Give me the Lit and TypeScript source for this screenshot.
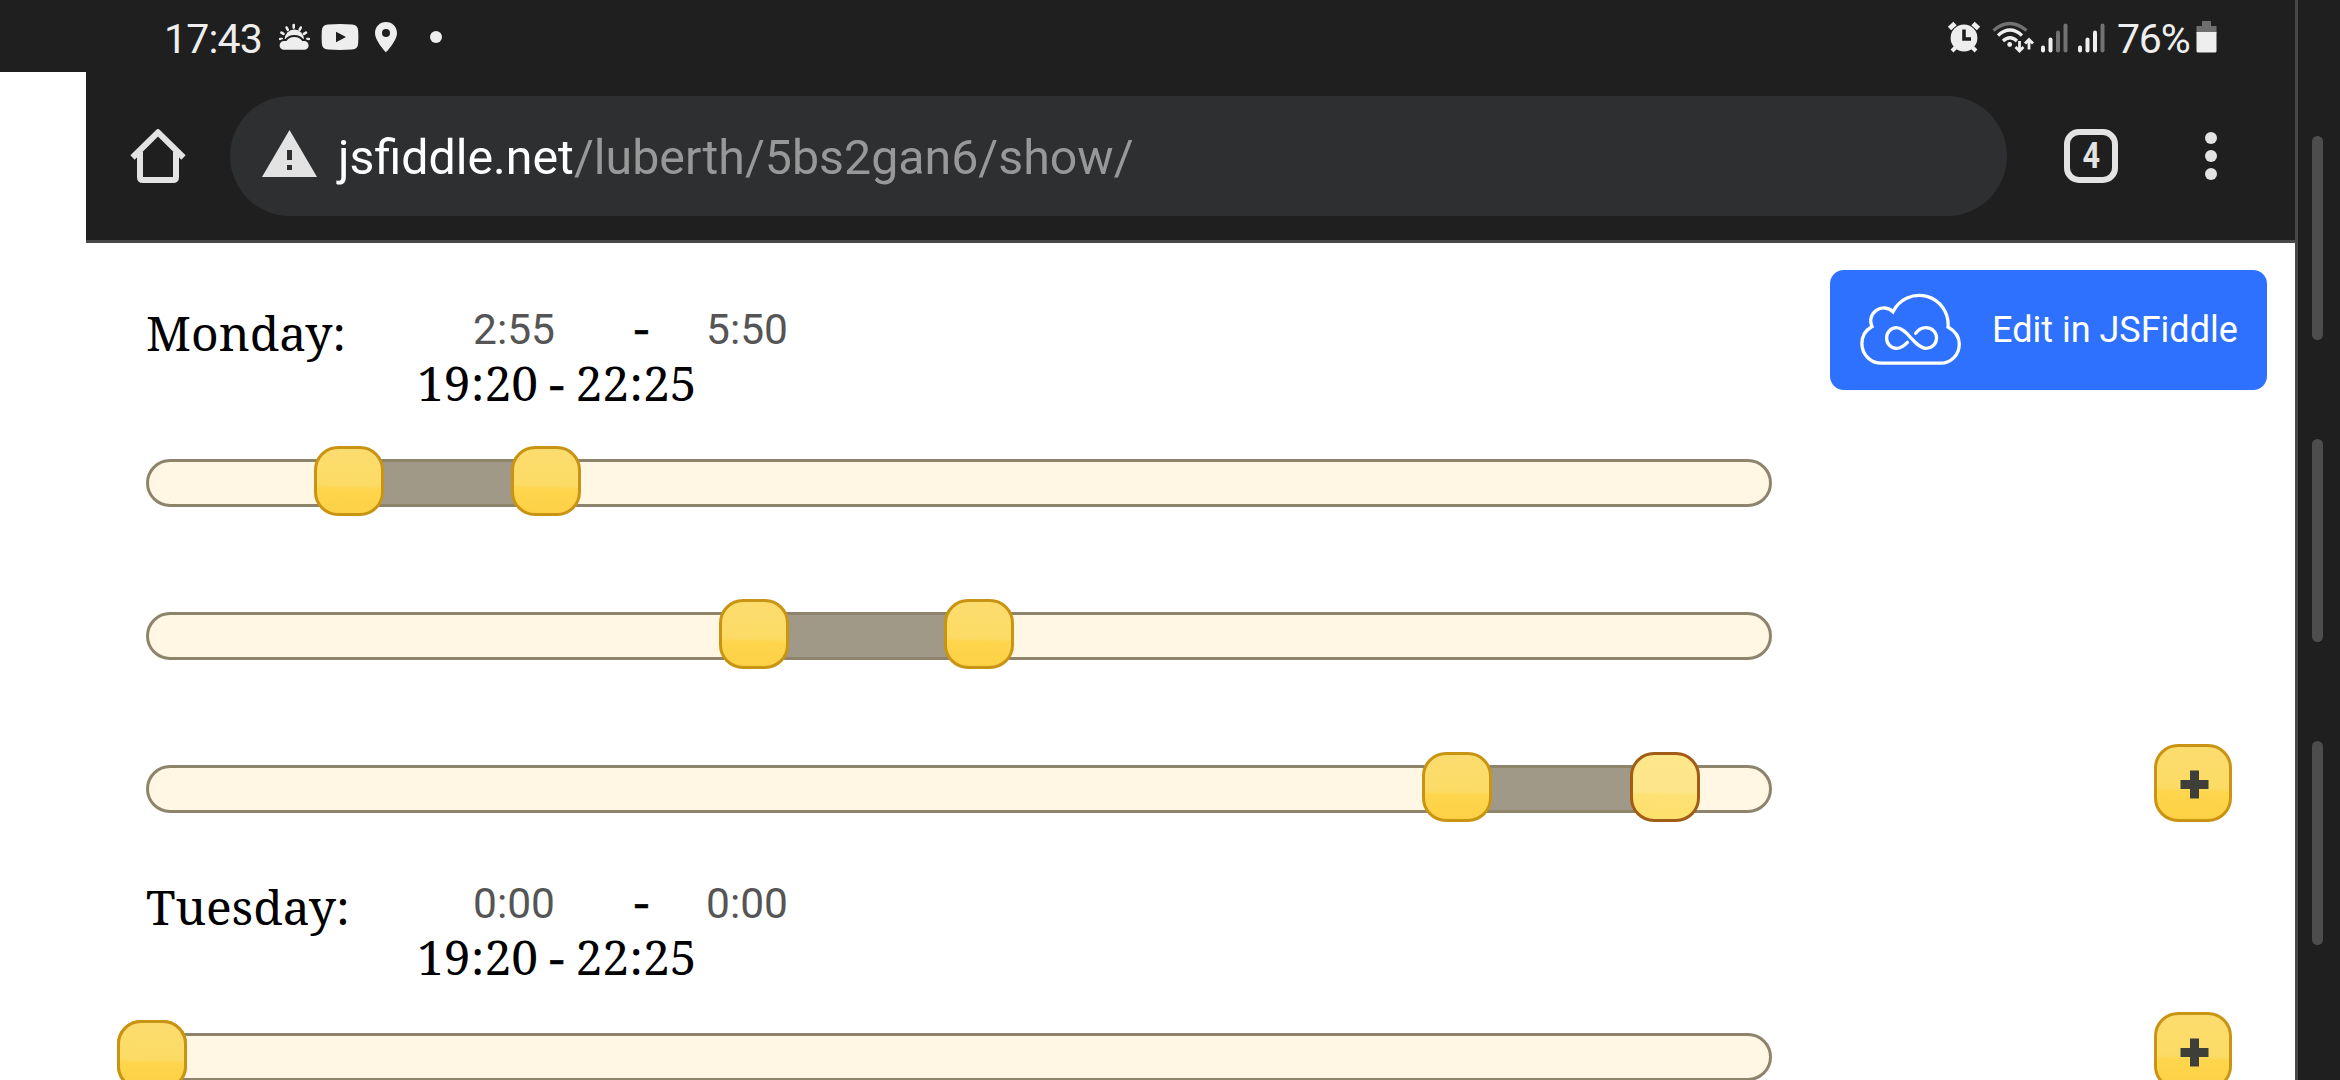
import { LitElement, html, css, svg } from "lit";
import { customElement, property } from "lit/decorators.js";
import { classMap } from "lit/directives/class-map.js";
import { styleMap } from "lit/directives/style-map.js";

@customElement("status-bar")
class StatusBar extends LitElement {
  static styles = css`
    :host {
      display: flex;
      justify-content: space-between;
      box-sizing: border-box;
      height: 72px;
      padding: 0 78px 0 164px;
      background: #1f1f1f;
      color: #eee;
      font: 41px/78px Roboto, sans-serif;
    }
    .group { display: flex; }
    .clock { width: 113px; letter-spacing: -0.8px; }
    .percent { width: 79px; letter-spacing: -1.2px; }
    svg { display: block; height: 72px; }
  `;
  bar(x: number, h: number, on: boolean) {
    return svg`<rect x=${x} y=${52.5 - h} width="4" height=${h} rx="2" fill=${on ? "#eee" : "#727272"}/>`;
  }
  render() {
    return html`
      <div class="group">
        <span class="clock">17:43</span>
        <svg width="175" height="72" viewBox="277 0 175 72" fill="#eee">
          <g stroke="#eee" stroke-width="2.6" stroke-linecap="round">
            <path d="M293.700 25v2.600M286.600 27.500l1.200 2.300M300.800 27.500l-1.200 2.300M281.400 32.600l2.100 1.300M306 32.600l-2.100 1.300M280.200 39h1.600M307.200 39h1.600" />
          </g>
          <path d="M284.500 40a9.800 10.500 0 0 1 19.600 0z" />
          <path d="M284 49.800a4.400 4.400 0 0 1 0-8.800h2.400a9 7.600 0 0 1 15.800 0h2a4.400 4.400 0 0 1 0 8.800z" stroke="#1f1f1f" stroke-width="4" paint-order="stroke" />
          <path fill-rule="evenodd" d="M328 24.400q12-.8 24 0 6 .3 6.200 6.500 .4 6 0 12 -.2 6.200-6.200 6.600 -12 .8-24 0 -6-.4-6.200-6.600 -.4-6 0-12 .2-6.200 6.200-6.500zM336 31.800v10.400l10-5.200z" />
          <path fill-rule="evenodd" d="M386 22c-6.200 0-11 4.800-11 11 0 8 11 19.300 11 19.300s11-11.300 11-19.300c0-6.200-4.800-11-11-11zm0 7a4 4 0 1 1 0 8 4 4 0 0 1 0-8z" />
          <circle cx="436" cy="37" r="6" />
        </svg>
      </div>
      <div class="group">
        <svg width="173" height="72" viewBox="1944 0 173 72" fill="#eee">
          <circle cx="1964" cy="38" r="13.400" />
          <path d="M1949.500 28.500l5.500-5M1978.500 28.500l-5.500-5" stroke="#eee" stroke-width="5" />
          <path d="M1956 47l-4 4M1972 47l4 4" stroke="#eee" stroke-width="4" />
          <path d="M1964 29.500v9.500h7" fill="none" stroke="#1f1f1f" stroke-width="3.600" />
          <g fill="none" stroke-width="3.200">
            <path d="M1993.500 30.500q16-14 33 0" stroke="#727272" />
            <path d="M1998 35.500q12-11 24 0M2003 41q7-6.500 14 0" stroke="#eee" />
            <path d="M2019.500 41v9M2015.500 47l4 4 4-4M2029 49.500v-9M2025 43.500l4-4 4 4" stroke="#eee" stroke-width="2.800" />
          </g>
          <circle cx="2009.700" cy="44.500" r="2.400" />
          ${[7, 15, 22, 29].map((h, i) => this.bar(2041 + i * 7.5, h, i < 2))}
          ${[7, 15, 22, 29].map((h, i) => this.bar(2078 + i * 7.5, h, i < 3))}
        </svg>
        <span class="percent">76%</span>
        <svg width="21" height="72" viewBox="0 0 21 72">
          <path d="M6 21h9v5h5.500v7H.5v-7H6z" fill="#6e6e6e" />
          <path d="M.5 32h20v19q0 1.500-1.500 1.500H2q-1.500 0-1.500-1.500z" fill="#eee" />
        </svg>
      </div>`;
  }
}

@customElement("address-bar")
class AddressBar extends LitElement {
  static styles = css`
    :host {
      display: flex;
      align-items: center;
      box-sizing: border-box;
      height: 171px;
      margin-left: 86px;
      padding: 0 78px 0 44px;
      background: #1f1f1f;
      border-bottom: 3px solid #484848;
      font-family: Roboto, sans-serif;
    }
    .home { width: 56px; height: 56px; margin-right: 44px; }
    .pill {
      display: flex;
      align-items: center;
      width: 1777px;
      height: 120px;
      border-radius: 60px;
      background: #2d2f31;
      color: #989898;
      font-size: 48.3px;
      line-height: 120px;
    }
    .warn { width: 55px; height: 48px; margin: 0 21px 7px 32px; }
    .url { padding-top: 3px; }
    .host { color: #fff; }
    .tabs {
      box-sizing: border-box;
      width: 54px;
      height: 54px;
      margin: 0 87px 0 57px;
      border: 6px solid #e3e3e3;
      border-radius: 15px;
      color: #e3e3e3;
      font-size: 36px;
      font-weight: 700;
      line-height: 43px;
      text-align: center;
    }
    .count { display: inline-block; transform: scaleX(0.85); }
    .menu { display: flex; flex-direction: column; gap: 6px; }
    .dot { width: 12px; height: 12px; border-radius: 50%; background: #e3e3e3; }
  `;
  render() {
    return html`
      <svg class="home" viewBox="0 0 56 56" fill="none" stroke="#e3e3e3" stroke-width="6">
        <path d="M2.500 29.500L28 4.300L53.500 29.500" stroke-linejoin="round" />
        <path d="M10 24V49q0 3 3 3H43q3 0 3-3V24" />
      </svg>
      <div class="pill">
        <svg class="warn" viewBox="0 0 55 48">
          <path d="M27.500 1L55 48H0z" fill="#e3e3e3" />
          <path d="M25 21h5v10h-5zM25 36h5v5h-5z" fill="#2d2f31" />
        </svg>
        <span class="url"><span class="host">jsfiddle.net</span>/luberth/5bs2gan6/show/</span>
      </div>
      <div class="tabs"><span class="count">4</span></div>
      <div class="menu"><i class="dot"></i><i class="dot"></i><i class="dot"></i></div>`;
  }
}

@customElement("range-slider")
class RangeSlider extends LitElement {
  @property({ type: Number }) from = 0;
  @property({ type: Number }) to = 0;
  @property({ type: Boolean }) active = false;
  static styles = css`
    :host { display: block; }
    .track {
      position: relative;
      box-sizing: border-box;
      width: 1626px;
      height: 48px;
      border: 3px solid #8e846b;
      border-radius: 24px;
      background: #fff7e4;
    }
    .range { position: absolute; top: 0; bottom: 0; background: #a09988; }
    .handle {
      position: absolute;
      top: -16px;
      box-sizing: border-box;
      width: 70px;
      height: 70px;
      margin-left: -35px;
      border: 3px solid #c99413;
      border-radius: 24px;
      background: linear-gradient(181deg, #fcdc6e, #fcdb65 57%, #fed54c 62%, #fed145);
    }
    .active {
      border-color: #a15c15;
      background: linear-gradient(181deg, #fee68b, #fde68a 57%, #fde174 62%, #fee06c);
    }
  `;
  render() {
    const at = (v: number) => styleMap({ left: `${v}px` });
    return html`<div class="track">
      <div class="range" style=${styleMap({ left: `${this.from}px`, width: `${this.to - this.from}px` })}></div>
      <div class="handle" style=${at(this.from)}></div>
      <div class=${classMap({ handle: true, active: this.active })} style=${at(this.to)}></div>
    </div>`;
  }
}

@customElement("add-button")
class AddButton extends LitElement {
  static styles = css`
    :host {
      display: block;
      box-sizing: border-box;
      width: 78px;
      height: 78px;
      border: 3px solid #c99413;
      border-radius: 24px;
      background: linear-gradient(181deg, #fcdc6e, #fcdb65 57%, #fed54c 62%, #fed145);
    }
    svg { display: block; }
  `;
  render() {
    return html`<svg width="72" height="72" viewBox="0 0 72 72">
      <path d="M33 23.500h9v9.500h9.500v9H42v9.500h-9V42h-9.500v-9H33z" fill="#3d3f38" />
    </svg>`;
  }
}

interface Shift { from: number; to: number; active?: boolean; }
interface Day { name: string; start: string; end: string; last: [string, string]; shifts: Shift[]; }

const DAYS: Day[] = [
  {
    name: "Monday:", start: "2:55", end: "5:50", last: ["19:20", "22:25"],
    shifts: [
      { from: 200, to: 397 },
      { from: 605, to: 830 },
      { from: 1308, to: 1516, active: true },
    ],
  },
  {
    name: "Tuesday:", start: "0:00", end: "0:00", last: ["19:20", "22:25"],
    shifts: [{ from: 3, to: 3 }],
  },
];

@customElement("day-schedule")
class DaySchedule extends LitElement {
  @property({ attribute: false }) day!: Day;
  static styles = css`
    :host { display: block; height: 574px; }
    .head {
      display: grid;
      grid-template-columns: 327px 233px 1fr;
      grid-template-rows: 53px 52px;
      box-sizing: border-box;
      height: 159px;
      padding: 4px 0 0 146px;
      color: #000;
      font: 48px/57px "Noto Serif", "Droid Serif", "DejaVu Serif Condensed", "DejaVu Serif", serif;
      white-space: nowrap;
    }
    .time { color: #555; font: 42.5px/52px Roboto, sans-serif; }
    .pair { display: grid; grid-template-columns: 161px 72px; line-height: 46px; }
    .dash { -webkit-text-stroke: 0.7px #000; }
    .last { grid-row: 2; grid-column: 1 / 4; padding-left: 271px; line-height: 52px; word-spacing: -1.2px; }
    .rows { display: flex; flex-direction: column; gap: 105px; }
    .row { display: flex; height: 48px; padding-left: 146px; }
    .add { margin: -21px 0 0 382px; }
  `;
  render() {
    const { name, start, end, last, shifts } = this.day;
    return html`
      <div class="head">
        <span class="name">${name}</span>
        <span class="pair"><span class="time">${start}</span><span class="dash">-</span></span>
        <span class="time">${end}</span>
        <span class="last">${last[0]} <span class="dash">-</span> ${last[1]}</span>
      </div>
      <div class="rows">
        ${shifts.map((s, i) => html`<div class="row">
          <range-slider .from=${s.from} .to=${s.to} .active=${!!s.active}></range-slider>
          ${i === shifts.length - 1 ? html`<add-button class="add"></add-button>` : null}
        </div>`)}
      </div>`;
  }
}

@customElement("app-root")
class AppRoot extends LitElement {
  static styles = css`
    :host {
      display: flex;
      width: 2340px;
      height: 1080px;
      overflow: hidden;
      background: #fff;
    }
    .screen { width: 2295px; height: 1080px; overflow: hidden; }
    .page { position: relative; padding-top: 57px; }
    .edit {
      position: absolute;
      top: 27px;
      right: 28px;
      display: flex;
      align-items: center;
      box-sizing: border-box;
      width: 437px;
      height: 120px;
      padding-left: 30px;
      border-radius: 14px;
      background: #2e71ff;
      color: #fff;
      font: 36px/120px Roboto, sans-serif;
      white-space: nowrap;
    }
    .cloud { width: 102px; height: 74px; margin-right: 30px; flex: none; }
    .edge {
      display: flex;
      flex-direction: column;
      align-items: center;
      gap: 99px;
      box-sizing: border-box;
      width: 45px;
      height: 1080px;
      padding: 136px 0 0 0;
      border-left: 3px solid #484848;
      background: #1f1f1f;
    }
    .grip { width: 11px; height: 203.500px; margin-left: -3px; border-radius: 6px; background: #4d4d4d; flex: none; }
  `;
  render() {
    return html`
      <div class="screen">
        <status-bar></status-bar>
        <address-bar></address-bar>
        <div class="page">
          ${DAYS.map((d) => html`<day-schedule .day=${d}></day-schedule>`)}
          <div class="edit">
            <svg class="cloud" viewBox="0 0 102 74" fill="none" stroke="#fff" stroke-width="3.300">
              <path d="M21.600 70.200C10.500 70.200 1.900 61.500 1.900 50.500C1.900 43 6 37 12 33.500A13 13 0 0 1 33 18.800A29 29 0 0 1 88 34C95 38 99.300 44 99.300 51C99.300 61.800 91 70.200 81 70.200Z" />
              <path stroke-linecap="round" d="M47.400 49.300C43 54 40 55.300 36.500 55.300C30.500 55.300 26.600 50.500 26.600 45S30.500 34.700 36.500 34.700C47 34.700 55 55.300 66 55.300C72.500 55.300 76.500 50.500 76.500 45S72.500 34.700 66 34.700C62 34.700 58.500 36.500 55.700 40.300" />
            </svg>
            <span>Edit in JSFiddle</span>
          </div>
        </div>
      </div>
      <div class="edge"><i class="grip"></i><i class="grip"></i><i class="grip"></i></div>`;
  }
}
